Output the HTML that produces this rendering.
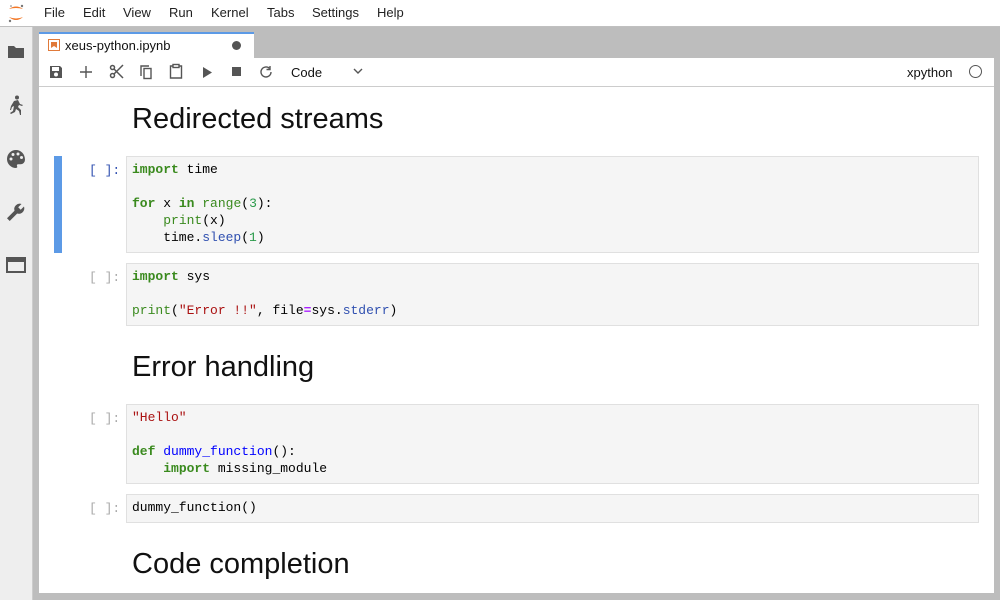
<!DOCTYPE html>
<html><head><style>
body{margin:0;width:1000px;height:600px;overflow:hidden;background:#bdbdbd;font-family:"Liberation Sans",sans-serif;position:relative}
.abs{position:absolute}
#menu{left:0;top:0;width:1000px;height:26px;background:#fff;border-bottom:1px solid #c0c0c0}
#menu span{position:absolute;top:5px;font-size:13px;color:#222}
#side{left:0;top:27px;width:32px;height:573px;background:#eee;border-right:1px solid #ccc}
#tab{left:39px;top:32px;width:215px;height:26px;background:#fff;border-top:2px solid #5c9ae6;box-sizing:border-box}
#nb{left:39px;top:58px;width:955px;height:535px;background:#fff}
#tb{left:0;top:0;width:955px;height:28px;border-bottom:1px solid #ccc}
h1{position:absolute;left:93px;margin:0;font-weight:normal;font-size:29px;color:#111}
.cell{position:absolute;left:87px;width:853px;background:#f5f5f5;border:1px solid #e0e0e0;box-sizing:border-box;font-family:"Liberation Mono",monospace;font-size:13px;line-height:17px;padding:4px 5px;white-space:pre;color:#000}
.pr{position:absolute;left:50px;font-family:"Liberation Mono",monospace;font-size:13px;color:#aaa}
.k{font-weight:bold;color:#3a8a1e}.b{color:#3a8a1e}.n{color:#2a9a4a}.s{color:#a11}.f{color:#00f}.a{color:#3050b0}
.ic{position:absolute;fill:#555}
</style></head><body>
<div id="menu" class="abs">
<svg class="abs" style="left:6px;top:3px" width="20" height="21"><path d="M3 6 Q10 1 17 6 Q10 4 3 6Z M3 14 Q10 20 17 14 Q10 17 3 14Z" fill="#f37726"/><circle cx="16" cy="3" r="1.2" fill="#777"/><circle cx="4" cy="18" r="1.2" fill="#777"/><circle cx="5" cy="3" r="0.8" fill="#777"/></svg>
<span style="left:44px">File</span><span style="left:83px">Edit</span><span style="left:123px">View</span><span style="left:169px">Run</span><span style="left:211px">Kernel</span><span style="left:267px">Tabs</span><span style="left:312px">Settings</span><span style="left:377px">Help</span>
</div>
<div id="side" class="abs">
<svg class="ic" style="left:7px;top:17px" width="18" height="16"><path d="M1 2h6l2 2h8v10H1z"/></svg>
<svg class="ic" style="left:8px;top:68px" width="16" height="21"><circle cx="9" cy="2.5" r="2"/><path d="M6 6l4-1 2 4 3 1-1 1-3-1-1 2 3 3v5h-1l-1-4-3-2-1 3-4 2-1-1 3-2 1-5-2 1-1 3H2l1-4z"/></svg>
<svg class="ic" style="left:6px;top:122px" width="20" height="20"><path d="M10 1a9 9 0 0 0 0 18c1 0 1.6-.8 1.1-1.7-.5-.9 0-2 1.1-2h2.3a4.5 4.5 0 0 0 4.5-4.5C19 5 15 1 10 1z"/><circle cx="5" cy="10" r="1.5" fill="#eee"/><circle cx="7" cy="5.5" r="1.5" fill="#eee"/><circle cx="12" cy="5" r="1.5" fill="#eee"/><circle cx="15.5" cy="8.5" r="1.5" fill="#eee"/></svg>
<svg class="ic" style="left:6px;top:175px" width="20" height="20"><path d="M18 4.5l-3.3 3.3-2.5-2.5L15.5 2a5.5 5.5 0 0 0-7 6.8L1 16.3l2.7 2.7 7.5-7.5A5.5 5.5 0 0 0 18 4.5z"/></svg>
<svg class="ic" style="left:6px;top:229px" width="20" height="17"><path d="M0 1h20v16H0z M2 6v9h16V6z"/><rect x="11" y="2" width="7" height="4"/></svg>
</div>
<div class="abs" style="left:33px;top:27px;width:5px;height:573px;background:#bdbdbd"></div>
<div id="tab" class="abs">
<svg class="abs" style="left:9px;top:5px" width="12" height="12"><rect x="0.5" y="0.5" width="11" height="11" fill="#fff" stroke="#e07a3a"/><path d="M3 3h6v6L6 7 3 9z" fill="#e07a3a"/></svg>
<span class="abs" style="left:26px;top:4px;font-size:13px;color:#111">xeus-python.ipynb</span>
<div class="abs" style="left:193px;top:7px;width:9px;height:9px;border-radius:50%;background:#555"></div>
</div>
<div id="nb" class="abs">
<div id="tb" class="abs">
<svg class="ic" style="left:10px;top:7px" width="14" height="14"><path d="M1 1h10l2 2v10H1z M3 2v4h7V2z" /><circle cx="7" cy="9.5" r="2" fill="#fff"/></svg>
<svg class="ic" style="left:41px;top:8px" width="12" height="12"><path d="M5.3 0h1.4v12H5.3z M0 5.3h12v1.4H0z"/></svg>
<svg class="abs" style="left:70px;top:6px" width="15" height="15" fill="none" stroke="#555" stroke-width="1.5"><circle cx="3.5" cy="3.5" r="2"/><circle cx="3.5" cy="11.5" r="2"/><path d="M5 5l9 9M5 10l9-9"/></svg>
<svg class="abs" style="left:100px;top:6px" width="14" height="16" fill="none" stroke="#555" stroke-width="1.4"><path d="M2 12V2h8"/><rect x="5" y="4.5" width="7" height="10"/></svg>
<svg class="abs" style="left:130px;top:5px" width="14" height="16" fill="none" stroke="#555" stroke-width="1.4"><path d="M4 3H1.5v12h11V3H10"/><rect x="4" y="1.5" width="6" height="3"/></svg>
<svg class="ic" style="left:164px;top:9px" width="10" height="11"><path d="M0 0l9 5.5L0 11z"/></svg>
<svg class="ic" style="left:193px;top:9px" width="10" height="10"><rect width="9" height="9"/></svg>
<svg class="abs" style="left:220px;top:7px" width="14" height="14" fill="none" stroke="#555" stroke-width="1.4"><path d="M12 7a5 5 0 1 1-1.5-3.6"/><path d="M11 1v3.5H7.5" /></svg>
<span class="abs" style="left:252px;top:7px;font-size:13px;color:#111">Code</span>
<svg class="abs" style="left:314px;top:10px" width="10" height="7" fill="none" stroke="#555" stroke-width="1.4"><path d="M1 1l4 4 4-4"/></svg>
<span class="abs" style="left:868px;top:7px;font-size:13px;color:#111">xpython</span>
<div class="abs" style="left:930px;top:7px;width:11px;height:11px;border-radius:50%;border:1.3px solid #555"></div>
</div>
<h1 style="top:45px">Redirected streams</h1>
<div class="abs" style="left:15px;top:98px;width:8px;height:97px;background:#5c9ae6"></div>
<div class="pr" style="top:105px;color:#3050b0">[ ]:</div>
<div class="cell" style="top:98px;height:97px"><span class="k">import</span> time

<span class="k">for</span> x <span class="k">in</span> <span class="b">range</span>(<span class="n">3</span>):
    <span class="b">print</span>(x)
    time.<span class="a">sleep</span>(<span class="n">1</span>)</div>
<div class="pr" style="top:212px">[ ]:</div>
<div class="cell" style="top:205px;height:63px"><span class="k">import</span> sys

<span class="b">print</span>(<span class="s">"Error !!"</span>, file<span style="color:#a2f;font-weight:bold">=</span>sys.<span class="a">stderr</span>)</div>
<h1 style="top:293px">Error handling</h1>
<div class="pr" style="top:353px">[ ]:</div>
<div class="cell" style="top:346px;height:80px"><span class="s">"Hello"</span>

<span class="k">def</span> <span class="f">dummy_function</span>():
    <span class="k">import</span> missing_module</div>
<div class="pr" style="top:443px">[ ]:</div>
<div class="cell" style="top:436px;height:29px">dummy_function()</div>
<h1 style="top:490px">Code completion</h1>
</div>
</body></html>
